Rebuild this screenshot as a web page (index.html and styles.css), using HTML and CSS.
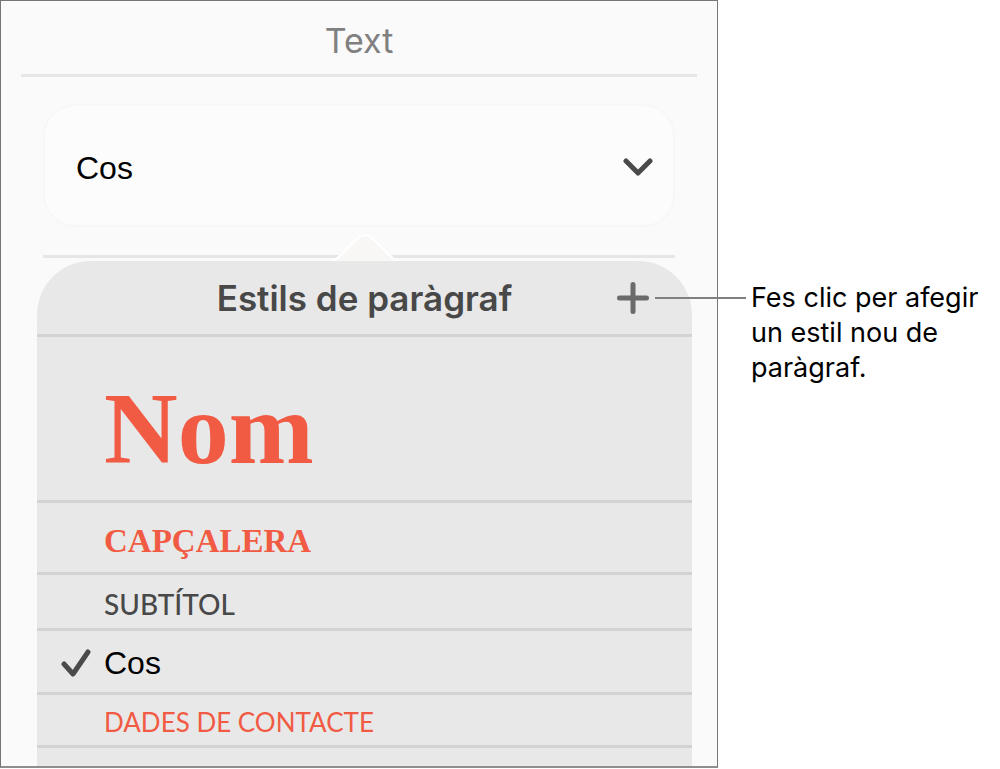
FILE: index.html
```
<!DOCTYPE html>
<html lang="ca">
<head>
  <meta charset="UTF-8">
  <meta name="viewport" content="width=device-width, initial-scale=1.0">
  <title>Estils de paràgraf</title>
  <link rel="stylesheet" href="styles.css">
</head>
<body>

  <div class="container">
    <div class="panel">
      <h1 class="panel-title">Text</h1>

      <div class="style-picker">
        <select class="style-select" aria-label="Estil de paràgraf">
          <option>Cos</option>
          <option>Nom</option>
          <option>Capçalera</option>
          <option>Subtítol</option>
        </select>
        <svg class="chevron" width="30" height="20" viewBox="0 0 30 20">
          <path d="M3 4 L15 16 L27 4" />
        </svg>
      </div>

      <div class="divider"></div>

      <div class="popover">
        <svg class="popover-arrow" width="68" height="28" viewBox="0 0 68 28">
          <path d="M0 27.5 C5 27 8 24 12 20 L25 7 C31 0.5 37 0.5 43 7 L56 20 C60 24 63 27 68 27.5" />
        </svg>
        <div class="popover-header">
          <h2>Estils de paràgraf</h2>
          <button class="add-btn" aria-label="Afegir un estil">
            <svg width="32" height="32" viewBox="0 0 32 32">
              <path d="M2.5 16 H29.5 M16 2.5 V29.5" />
            </svg>
          </button>
        </div>
        <button class="style-row name">Nom</button>
        <button class="style-row heading">CAPÇALERA</button>
        <button class="style-row subtitle">SUBTÍTOL</button>
        <button class="style-row body-text">
          <svg class="check" width="30" height="30" viewBox="0 0 30 30">
            <path d="M3 15 L12 25 L27 3" />
          </svg>
          Cos
        </button>
        <button class="style-row contact">DADES DE CONTACTE</button>
      </div>
    </div>

    <p class="callout">Fes clic per afegir un estil nou de paràgraf.</p>
  </div>

</body>
</html>
```
FILE: styles.css
```
* {
  box-sizing: border-box;
}

body {
  margin: 0;
  background-color: #fff;
  font-family: 'Inter', sans-serif;
}

.container {
  display: grid;
  grid-template-columns: 1fr 249px;
  column-gap: 33px;
  align-items: start;
}

.panel {
  border: 1px solid #77757a;
  border-bottom: 2px solid #8e8e8e;
  background-color: #fafafa;
}

.panel-title {
  margin: 0 20px;
  padding: 20px 0 13px;
  border-bottom: 3px solid #e6e6e6;
  color: #808080;
  font-size: 34px;
  font-weight: 400;
  line-height: 40px;
  text-align: center;
}

/* Current style */
.style-picker {
  position: relative;
  margin: 27px 42px 28px;
}

.style-select {
  display: block;
  width: 100%;
  height: 123px;
  padding: 4px 31px 0;
  border: 2px solid #f7f7f7;
  border-radius: 32px;
  background-color: #fcfcfc;
  color: #000;
  font-family: 'Liberation Sans', Arial, sans-serif;
  font-size: 32px;
  appearance: none;
}

.chevron {
  position: absolute;
  top: 53px;
  right: 22px;
  pointer-events: none;
}

.divider {
  height: 3px;
  margin: 0 42px 3px;
  background-color: #e6e6e6;
}

svg path {
  fill: none;
  stroke: #4a4a4a;
  stroke-width: 5;
  stroke-linecap: round;
  stroke-linejoin: round;
}

/* Popover with the list of styles */
.popover {
  position: relative;
  margin: 0 25px 0 36px;
  padding-bottom: 18px;
  border-radius: 54px 54px 0 0;
  background-color: #e8e8e8;
}

.popover-arrow {
  position: absolute;
  top: -28px;
  left: 50%;
  transform: translateX(-50%);
}

.popover-arrow path {
  fill: #f8f7f5;
  stroke: #fff;
  stroke-width: 2;
}

.popover-header {
  display: grid;
  grid-template-columns: 1fr auto 1fr;
  align-items: center;
  height: 76px;
  border-bottom: 3px solid #d3d3d3;
}

.popover-header h2 {
  grid-column: 2;
  margin: 0;
  color: #484848;
  font-size: 35px;
  font-weight: 600;
}

.add-btn {
  display: flex;
  justify-self: end;
  margin-right: 43px;
  padding: 0;
  border: none;
  background: none;
  cursor: pointer;
}

.add-btn path {
  stroke: #6b6b6b;
}

.style-row {
  display: flex;
  align-items: center;
  width: 100%;
  padding: 0 67px;
  border: none;
  border-bottom: 3px solid #d3d3d3;
  background: none;
  text-align: left;
  cursor: pointer;
}

.name {
  height: 166px;
  padding-top: 20px;
  color: #f15a43;
  font-family: 'Liberation Serif', serif;
  font-size: 102px;
  font-weight: 700;
}

.heading {
  height: 72px;
  padding-top: 8px;
  color: #f15a43;
  font-family: 'Liberation Serif', serif;
  font-size: 33px;
  font-weight: 700;
}

.subtitle {
  height: 56px;
  padding-top: 4px;
  color: #484848;
  font-family: 'Lato', sans-serif;
  font-size: 28px;
  font-weight: 500;
}

.body-text {
  gap: 13px;
  height: 64px;
  padding-top: 4px;
  padding-left: 24px;
  color: #000;
  font-family: 'Liberation Sans', Arial, sans-serif;
  font-size: 32px;
}

.contact {
  height: 53px;
  padding-top: 4px;
  color: #f15a43;
  font-family: 'Lato', sans-serif;
  font-size: 26px;
}

/* Note with a line that points at the add button */
.callout {
  position: relative;
  margin: 280px 0 0;
  color: #000;
  font-size: 27px;
  line-height: 35px;
}

.callout::before {
  content: '';
  position: absolute;
  top: 17px;
  left: -96px;
  width: 91px;
  height: 2px;
  background-color: #808080;
}
```
